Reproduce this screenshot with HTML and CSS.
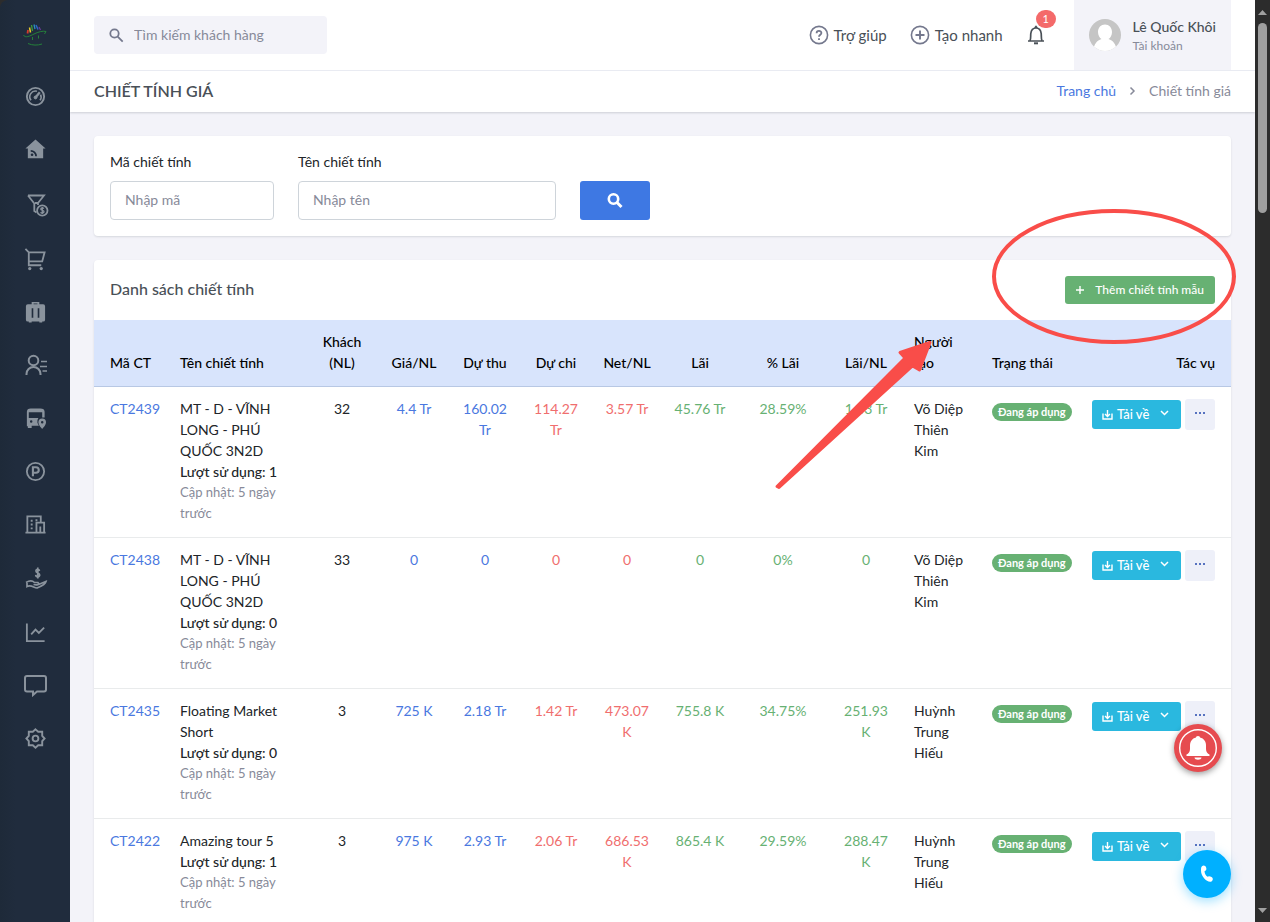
FILE: index.html
```html
<!DOCTYPE html>
<html lang="vi">
<head>
<meta charset="utf-8">
<meta name="viewport" content="width=device-width, initial-scale=1">
<title>Chiết tính giá</title>
<link rel="stylesheet" href="styles.css">
</head>
<body>
<div class="app">
  <aside class="sidebar">
    <a class="logo" href="#" aria-label="Trang chủ">
      <svg width="24" height="24" viewBox="0 0 24 24" fill="none">
        <path d="M4.500 10.500L5 7" stroke="#d33a2c" stroke-width="1.800"/><path d="M7.500 9.500L6.500 4.500" stroke="#e8c82a" stroke-width="1.500"/><path d="M9.500 8L8.500 2" stroke="#3f9a3a" stroke-width="1.300"/><path d="M12 6L11 1.500" stroke="#2a8fc0" stroke-width="1.300"/><path d="M15 6.500L13 2" stroke="#2c66c8" stroke-width="1.500"/><path d="M17.500 7L16 4" stroke="#6a3a9a" stroke-width="1.200"/>
        <path d="M.5 12C2 15.500 7 13 11 11S20 7.500 23 8.500M23 8.500L21.500 11M5 20.500C9 22.500 15 22.500 19 21M9.500 14V17M15.500 12.500V15.500" stroke="#24803a" stroke-width="1"/>
      </svg>
    </a>
    <nav class="menu" aria-label="Menu chính">
      <a href="#" aria-label="Bảng điều khiển"><svg width="23" height="23" viewBox="0 0 24 24" fill="none" stroke="currentColor" stroke-width="2"><circle cx="12" cy="12" r="9"/><path d="M7.300 16A6 6 0 0 1 13.500 6.500M17.300 10A6 6 0 0 1 16.700 16" stroke-width="1.700"/><path d="M12 13L16.500 7.500" stroke-width="2.400"/><circle cx="12" cy="13" r="1.500" fill="currentColor" stroke-width="1"/></svg></a>
      <a href="#" aria-label="Trang nhà"><svg width="23" height="23" viewBox="0 0 24 24"><path fill="currentColor" fill-rule="evenodd" d="M12 1.500L22.500 11H20V21H4V11H1.500ZM7 17.500A1.400 1.400 0 1 0 9.800 17.500A1.400 1.400 0 1 0 7 17.500ZM7 12.500V14.300A4.700 4.700 0 0 1 11.700 19H13.500A6.500 6.500 0 0 0 7 12.500Z"/></svg></a>
      <a href="#" aria-label="Cơ hội"><svg width="27" height="27" viewBox="0 0 27 27" fill="none" stroke="currentColor" stroke-width="1.800"><path d="M6 4.500H22L16 12V14M6 4.500L12.300 12.500V20L14.500 21.500M13 12H16"/><circle cx="20.300" cy="19.500" r="5.200"/><path d="M22 17.500C21 16.500 18.700 16.800 18.800 18.100C19 19.800 22 19 22 20.800C22 22.300 19.300 22.300 18.500 21.300M20.300 16V23" stroke-width="1.300"/></svg></a>
      <a href="#" aria-label="Đơn hàng"><svg width="23" height="23" viewBox="0 0 24 24" fill="none" stroke="currentColor" stroke-width="1.900"><path d="M1.500 1L5 4.500H21.500L19 14H5V4.500M5 14V18H18"/><circle cx="6" cy="21.500" r="1.700" fill="currentColor" stroke="none"/><circle cx="18" cy="21.500" r="1.700" fill="currentColor" stroke="none"/></svg></a>
      <a href="#" aria-label="Tour"><svg width="23" height="23" viewBox="0 0 24 24"><path fill="currentColor" fill-rule="evenodd" d="M8 3.500V1H16V3.500H20A2 2 0 0 1 22 5.500V19.500A2 2 0 0 1 20 21.500H19V22.500H16V21.500H8V22.500H5V21.500H4A2 2 0 0 1 2 19.500V5.500A2 2 0 0 1 4 3.500ZM10 2.700V3.500H14V2.700ZM8 7.500V17.500H9.700V7.500ZM14.300 7.500V17.500H16V7.500Z"/></svg></a>
      <a href="#" aria-label="Khách hàng"><svg width="27" height="23" viewBox="0 0 27 23" fill="none" stroke="currentColor" stroke-width="2"><circle cx="11.500" cy="6.500" r="4.800"/><path d="M4.500 21V20A7 7 0 0 1 18.500 20V21"/><path d="M19 7.500H25M18 12.500H25M20.500 17H25" stroke-width="1.600"/></svg></a>
      <a href="#" aria-label="Điều xe"><svg width="23" height="23" viewBox="0 0 24 24"><path fill="currentColor" fill-rule="evenodd" d="M3 20V5Q3 1.500 7 1.500H17Q21.500 1.500 21.500 5V11H19V5.500H5V11.500H15Q13.500 13.500 14 16.500L15.500 19.500H8V22H4V20ZM6.200 15.200A1.300 1.300 0 1 0 8.800 15.200A1.300 1.300 0 1 0 6.200 15.200ZM19 12A4 4 0 0 1 23 16C23 19 19 23 19 23S15 19 15 16A4 4 0 0 1 19 12ZM17.700 16A1.300 1.300 0 1 0 20.300 16A1.300 1.300 0 1 0 17.700 16Z"/></svg></a>
      <a href="#" aria-label="Điểm đỗ"><svg width="23" height="23" viewBox="0 0 24 24" fill="none" stroke="currentColor" stroke-width="1.900"><circle cx="12" cy="12" r="9"/><path d="M9.300 17V7.500H12.500A2.900 2.900 0 0 1 12.500 13.300H9.500" stroke-width="2.200"/></svg></a>
      <a href="#" aria-label="Khách sạn"><svg width="23" height="23" viewBox="0 0 24 24" fill="none" stroke="currentColor" stroke-width="1.900"><path d="M1.500 20.500H22.500M3.500 20.500V3.500H17.500V9.500M21 20.500V10H13V20.500M17 20.500V14"/><path d="M7 8H9M7 12H9M7 16H9M12 7.500H14" stroke-width="2"/></svg></a>
      <a href="#" aria-label="Thu chi"><svg width="25" height="25" viewBox="0 0 25 25" fill="none" stroke="currentColor" stroke-width="1.700"><path d="M16.500 5C16 2.500 12.700 2.800 13 5.200C13.300 7.400 16.700 6.500 16.700 9C16.700 11.300 13 11.400 12.700 8.800M14.800 1.500V12.500"/><path d="M3 16.500C7 14 9.500 14.500 11.500 16.500H15C17 18.500 14 19.500 10.500 18.500M15.500 18.500L23 15.500C22 19 17.500 20.500 14 22C10.500 21.500 8 18.500 4 20.500V17"/></svg></a>
      <a href="#" aria-label="Báo cáo"><svg width="23" height="23" viewBox="0 0 24 24" fill="none" stroke="currentColor" stroke-width="1.900"><path d="M3 2.500V21H21.500M7.500 14L12 9L15.500 12.500L21 7"/></svg></a>
      <a href="#" aria-label="Tin nhắn"><svg width="25" height="23" viewBox="0 0 25 23" fill="none" stroke="currentColor" stroke-width="2"><path d="M4 2H21Q23 2 23 4V15.500Q23 17.500 21 17.500H14L10 21V17.500H4Q2 17.500 2 15.500V4Q2 2 4 2Z"/></svg></a>
      <a href="#" aria-label="Cài đặt"><svg width="23" height="23" viewBox="0 0 24 24" fill="none" stroke="currentColor" stroke-width="2"><path d="M12 2.500L14.800 5H19V9.200L21.500 12L19 14.800V19H14.800L12 21.500L9.200 19H5V14.800L2.500 12L5 9.200V5H9.200Z"/><circle cx="12" cy="12" r="3"/></svg></a>
    </nav>
  </aside>

  <div class="page">
    <header class="topbar">
      <label class="search">
        <svg width="15" height="15" viewBox="0 0 15 15" fill="none" stroke="currentColor" stroke-width="1.800"><circle cx="5.500" cy="5.500" r="4.200"/><path d="M8.700 8.700L13.700 13.700"/></svg>
        <input type="search" placeholder="Tìm kiếm khách hàng" aria-label="Tìm kiếm khách hàng">
      </label>
      <div class="tools">
        <a class="tool" href="#"><svg width="20" height="20" viewBox="0 0 20 20" fill="none" stroke="currentColor" stroke-width="1.600"><circle cx="10" cy="10" r="8.600"/><path d="M7.600 8.200C7.600 5.200 12.400 5.200 12.400 8C12.400 9.800 10 9.800 10 11.800M10 13.200V15" stroke-width="1.800"/></svg>Trợ giúp</a>
        <a class="tool" href="#"><svg width="20" height="20" viewBox="0 0 20 20" fill="none" stroke="currentColor" stroke-width="1.600"><circle cx="10" cy="10" r="8.600"/><path d="M10 5.500V14.500M5.500 10H14.500" stroke-width="1.900"/></svg>Tạo nhanh</a>
        <button class="bell" type="button" aria-label="Thông báo">
          <svg width="20" height="20" viewBox="0 0 20 20" fill="none" stroke="currentColor" stroke-width="1.700"><path d="M2 16H18M4 15.500C5 14 4.500 11 4.800 8.500C5.200 5 7.500 3 10 3S14.800 5 15.200 8.500C15.500 11 15 14 16 15.500M8.800 3L10 1.500L11.200 3"/><path d="M8 18.300H12" stroke-width="2"/></svg>
          <span class="count">1</span>
        </button>
        <a class="profile" href="#">
          <svg width="32" height="32" viewBox="0 0 32 32"><defs><clipPath id="av"><circle cx="16" cy="16" r="16"/></clipPath></defs><g clip-path="url(#av)"><rect width="32" height="32" fill="#c5c5c5"/><path fill="#fff" d="M16 5.500C20 5.500 23 8.500 23 13C23 16 21.500 19 19.500 20C24 21.500 27 25 28 32H4C5 25 8 21.500 12.500 20C10.500 19 9 16 9 13C9 8.500 12 5.500 16 5.500Z"/></g></svg>
          <span class="who"><span>Lê Quốc Khôi</span><small>Tài khoản</small></span>
        </a>
      </div>
    </header>

    <div class="titlebar">
      <h1>CHIẾT TÍNH GIÁ</h1>
      <nav class="crumbs" aria-label="Đường dẫn">
        <a href="#">Trang chủ</a>
        <svg width="7" height="10" viewBox="0 0 7 10" fill="none" stroke="currentColor" stroke-width="1.500"><path d="M1.500 1.500L5 5L1.500 8.500"/></svg>
        <span>Chiết tính giá</span>
      </nav>
    </div>

    <main class="content">
      <form class="card filter">
        <div class="field code"><label for="ma">Mã chiết tính</label><input id="ma" type="text" placeholder="Nhập mã"></div>
        <div class="field name"><label for="ten">Tên chiết tính</label><input id="ten" type="text" placeholder="Nhập tên"></div>
        <button class="find" type="button" aria-label="Tìm"><svg width="16" height="16" viewBox="0 0 16 16" fill="none" stroke="currentColor" stroke-width="2.600"><circle cx="6.500" cy="6" r="4.700"/><path d="M10 9.500L14.500 14" stroke-width="3"/></svg></button>
      </form>

      <section class="card list">
        <div class="list-head">
          <h2>Danh sách chiết tính</h2>
          <button class="add" type="button"><svg width="10" height="10" viewBox="0 0 10 10" stroke="currentColor" stroke-width="1.400"><path d="M5 1V9M1 5H9"/></svg>Thêm chiết tính mẫu</button>
        </div>
        <table>
          <colgroup><col class="c76"><col class="c136"><col class="c72"><col class="c72"><col class="c70"><col class="c72"><col class="c70"><col class="c76"><col class="c90"><col class="c76"><col class="c78"><col class="c100"><col class="c149"></colgroup>
          <thead><tr><th class="l">Mã CT</th><th class="l">Tên chiết tính</th><th>Khách (NL)</th><th>Giá/NL</th><th>Dự thu</th><th>Dự chi</th><th>Net/NL</th><th>Lãi</th><th>% Lãi</th><th>Lãi/NL</th><th class="l">Người<br>tạo</th><th class="l">Trạng thái</th><th class="r">Tác vụ</th></tr></thead>
          <tbody>
            <tr><td class="l"><a href="#">CT2439</a></td><td class="l">MT - D - VĨNH LONG - PHÚ QUỐC 3N2D<div class="used">Lượt sử dụng: 1</div><small>Cập nhật: 5 ngày trước</small></td><td>32</td><td class="blue">4.4 Tr</td><td class="blue">160.02 Tr</td><td class="red">114.27 Tr</td><td class="red">3.57 Tr</td><td class="green">45.76 Tr</td><td class="green">28.59%</td><td class="green">1.43 Tr</td><td class="l">Võ Diệp Thiên Kim</td><td class="l"><span class="badge">Đang áp dụng</span></td><td><div class="actions"><button class="dl" type="button"><svg width="11" height="11" viewBox="0 0 11 11" fill="none" stroke="currentColor" stroke-width="1.400"><path d="M1 4.500V10H10V4.500M5.500 1V7.500M3 5L5.500 7.500L8 5"/></svg>Tải về<svg class="chev" width="9" height="8" viewBox="0 0 9 8" fill="none" stroke="currentColor" stroke-width="1.500"><path d="M1 1L4.500 4.500L8 1"/></svg></button><button class="more" type="button" aria-label="Thêm thao tác"><i></i><i></i><i></i></button></div></td></tr>
            <tr><td class="l"><a href="#">CT2438</a></td><td class="l">MT - D - VĨNH LONG - PHÚ QUỐC 3N2D<div class="used">Lượt sử dụng: 0</div><small>Cập nhật: 5 ngày trước</small></td><td>33</td><td class="blue">0</td><td class="blue">0</td><td class="red">0</td><td class="red">0</td><td class="green">0</td><td class="green">0%</td><td class="green">0</td><td class="l">Võ Diệp Thiên Kim</td><td class="l"><span class="badge">Đang áp dụng</span></td><td><div class="actions"><button class="dl" type="button"><svg width="11" height="11" viewBox="0 0 11 11" fill="none" stroke="currentColor" stroke-width="1.400"><path d="M1 4.500V10H10V4.500M5.500 1V7.500M3 5L5.500 7.500L8 5"/></svg>Tải về<svg class="chev" width="9" height="8" viewBox="0 0 9 8" fill="none" stroke="currentColor" stroke-width="1.500"><path d="M1 1L4.500 4.500L8 1"/></svg></button><button class="more" type="button" aria-label="Thêm thao tác"><i></i><i></i><i></i></button></div></td></tr>
            <tr><td class="l"><a href="#">CT2435</a></td><td class="l">Floating Market Short<div class="used">Lượt sử dụng: 0</div><small>Cập nhật: 5 ngày trước</small></td><td>3</td><td class="blue">725 K</td><td class="blue">2.18 Tr</td><td class="red">1.42 Tr</td><td class="red">473.07 K</td><td class="green">755.8 K</td><td class="green">34.75%</td><td class="green">251.93 K</td><td class="l">Huỳnh Trung Hiếu</td><td class="l"><span class="badge">Đang áp dụng</span></td><td><div class="actions"><button class="dl" type="button"><svg width="11" height="11" viewBox="0 0 11 11" fill="none" stroke="currentColor" stroke-width="1.400"><path d="M1 4.500V10H10V4.500M5.500 1V7.500M3 5L5.500 7.500L8 5"/></svg>Tải về<svg class="chev" width="9" height="8" viewBox="0 0 9 8" fill="none" stroke="currentColor" stroke-width="1.500"><path d="M1 1L4.500 4.500L8 1"/></svg></button><button class="more" type="button" aria-label="Thêm thao tác"><i></i><i></i><i></i></button></div></td></tr>
            <tr><td class="l"><a href="#">CT2422</a></td><td class="l">Amazing tour 5<div class="used">Lượt sử dụng: 1</div><small>Cập nhật: 5 ngày trước</small></td><td>3</td><td class="blue">975 K</td><td class="blue">2.93 Tr</td><td class="red">2.06 Tr</td><td class="red">686.53 K</td><td class="green">865.4 K</td><td class="green">29.59%</td><td class="green">288.47 K</td><td class="l">Huỳnh Trung Hiếu</td><td class="l"><span class="badge">Đang áp dụng</span></td><td><div class="actions"><button class="dl" type="button"><svg width="11" height="11" viewBox="0 0 11 11" fill="none" stroke="currentColor" stroke-width="1.400"><path d="M1 4.500V10H10V4.500M5.500 1V7.500M3 5L5.500 7.500L8 5"/></svg>Tải về<svg class="chev" width="9" height="8" viewBox="0 0 9 8" fill="none" stroke="currentColor" stroke-width="1.500"><path d="M1 1L4.500 4.500L8 1"/></svg></button><button class="more" type="button" aria-label="Thêm thao tác"><i></i><i></i><i></i></button></div></td></tr>
          </tbody>
        </table>
      </section>
    </main>
  </div>

  <div class="scrollbar" aria-hidden="true">
    <svg width="9" height="5" viewBox="0 0 9 5"><path d="M0 5L4.500 0L9 5Z" fill="#a0a0a0"/></svg>
    <span class="thumb"></span>
    <svg class="down" width="9" height="5" viewBox="0 0 9 5"><path d="M0 0L4.500 5L9 0Z" fill="#a0a0a0"/></svg>
  </div>
</div>

<svg class="marks" width="480" height="290" viewBox="770 205 480 290" aria-hidden="true">
  <ellipse cx="1114" cy="276.500" rx="120" ry="65.500" fill="none" stroke="#f94d49" stroke-width="4"/>
  <path d="M777 486.500L905 358L900 352.500L930 342.500L919.500 370L912.500 366L779 487.500Z" fill="#f94d49" stroke="#f94d49" stroke-width="3" stroke-linejoin="round"/>
</svg>

<button class="fab alert" type="button" aria-label="Thông báo mới"><svg width="48" height="48" viewBox="0 0 48 48"><circle cx="24" cy="24" r="18.300" fill="none" stroke="#fff" stroke-width="1.400"/><path fill="#fff" d="M24 12C25.500 12 26 13 26 13.500C30 14.500 32 17.500 32 21.500V25C32 28 33.500 29.500 35.500 30.500V32H12.500V30.500C14.500 29.500 16 28 16 25V21.500C16 17.500 18 14.500 22 13.500C22 13 22.500 12 24 12ZM20.500 33.500H27.500C27.500 36.500 20.500 36.500 20.500 33.500Z"/></svg></button>
<button class="fab call" type="button" aria-label="Gọi điện"><svg width="16" height="20" viewBox="0 0 16 20"><path fill="#fff" d="M3 2.200C4.500 1 6.500 1.500 7.300 4C7.700 5.700 6.800 7 5.500 7.200C5.700 9.500 6.800 11.500 8.500 12.700C9.500 11.800 11 12 12.500 13C14.500 14.300 14 16.500 12.500 17.500C8.500 19 2 13 2 6.500C2 4.500 2 3.200 3 2.200Z"/></svg></button>
</body>
</html>
```

FILE: styles.css
```css
* { box-sizing: border-box; }
body {
  margin: 0;
  background: #2c2c2c;
  color: #212529;
  font: 14px/21px Lato, "Noto Sans", sans-serif;
}
a { color: #4a78e0; text-decoration: none; }
button, input { font: inherit; color: inherit; border: 0; margin: 0; }
button { cursor: pointer; padding: 0; }
svg { display: block; flex: none; }
h1, h2 { margin: 0; font-size: 16px; color: #495057; }
small { font-size: 12px; color: #878a99; }

.app { display: flex; height: 100vh; overflow: hidden; }

.sidebar {
  flex: 0 0 70px;
  background: linear-gradient(90deg, #1e2a39, #202c3d 16px);
  border-top-left-radius: 8px;
}
.logo { display: flex; justify-content: center; align-items: center; height: 70px; }
.menu { display: flex; flex-direction: column; }
.menu a { display: flex; justify-content: center; padding: 15px 0; color: #8a939d; }

.page {
  flex: 1;
  min-width: 0;
  background: #f3f3f9;
  overflow-y: auto;
  scrollbar-width: none;
}
.topbar {
  display: flex;
  justify-content: space-between;
  align-items: center;
  height: 71px;
  padding: 0 24px;
  background: #fff;
  border-bottom: 1px solid #eceef4;
}
.search {
  display: flex;
  align-items: center;
  gap: 10px;
  width: 233px;
  height: 38px;
  padding: 0 15px;
  background: #f3f3f9;
  border-radius: 4px;
  color: #74788d;
}
.search input { flex: 1; min-width: 0; padding: 0 0 2px; background: none; outline: 0; }
input::placeholder { color: #878a99; opacity: 1; }
.tools { display: flex; align-items: center; height: 100%; }
.tool { display: flex; align-items: center; gap: 5px; margin-right: 23px; color: #495057; font-size: 15px; }
.tool svg { color: #74788d; }
.bell { position: relative; margin-right: 28px; background: none; color: #495057; }
.count {
  position: absolute;
  left: 10px;
  top: -15px;
  width: 20px;
  height: 18px;
  border-radius: 9px;
  background: #f46a6a;
  color: #fff;
  font-size: 11px;
  line-height: 18px;
}
.profile { display: flex; align-items: center; gap: 12px; height: 100%; padding: 0 15px; background: #f3f3f9; color: #495057; }
.who { display: flex; flex-direction: column; font-weight: 500; }
.who small { font-weight: 400; line-height: 18px; }

.titlebar {
  display: flex;
  justify-content: space-between;
  align-items: center;
  height: 41px;
  padding: 0 24px 2px;
  background: #fff;
  box-shadow: 0 1px 2px rgba(56, 65, 74, .2);
}
.titlebar h1 { font-weight: 600; }
.crumbs { display: flex; align-items: center; gap: 13px; color: #878a99; }

.content { display: flex; flex-direction: column; gap: 24px; padding: 24px; }
.card { background: #fff; border-radius: 4px; box-shadow: 0 1px 2px rgba(56, 65, 74, .15); }
.filter { display: flex; align-items: flex-end; gap: 24px; padding: 15px 16px 16px; }
.field { display: flex; flex-direction: column; gap: 9px; }
.code { width: 164px; }
.name { width: 258px; }
.field input { width: 100%; height: 39px; padding: 0 14px 2px; background: #fff; border: 1px solid #ced4da; border-radius: 4px; }
.find { display: flex; justify-content: center; align-items: center; width: 70px; height: 39px; background: #3e78e3; border-radius: 3px; color: #fff; }

.list-head { display: flex; justify-content: space-between; align-items: center; padding: 16px; }
.list-head h2 { padding-bottom: 3px; font-weight: 500; }
.add { display: flex; align-items: center; gap: 10px; height: 28px; padding: 0 11px 1px 10px; background: #67b173; border-radius: 3px; color: #fff; font-size: 12px; font-weight: 500; }

table { width: 100%; table-layout: fixed; border-collapse: separate; border-spacing: 0; }
.c70 { width: 70px; }
.c72 { width: 72px; }
.c76 { width: 76px; }
.c78 { width: 78px; }
.c90 { width: 90px; }
.c100 { width: 100px; }
.c136 { width: 136px; }
.c149 { width: 149px; }
th, td { padding: 11px 10px 13px; text-align: center; vertical-align: top; border-bottom: 1px solid #e9ebec; }
th { background: #d8e4fc; border-color: #b8c8e4; color: #000; font-weight: 500; vertical-align: bottom; }
th:first-child, td:first-child { padding-left: 16px; padding-right: 4px; }
th:last-child, td:last-child { padding-right: 16px; }
td small { display: block; font-size: 13px; line-height: 21px; }
.l { text-align: left; }
.r { text-align: right; }
.used { font-weight: 500; }
.blue { color: #4a78e0; }
.red { color: #f06e6e; }
.green { color: #67b173; }
.badge { display: inline-block; margin-top: 5px; padding: 0 6px 1px; background: #67b173; border-radius: 9px; color: #fff; font-size: 11px; font-weight: 700; line-height: 17px; vertical-align: top; white-space: nowrap; }
.actions { display: flex; justify-content: flex-end; align-items: center; gap: 4px; padding-top: 1px; }
.dl { display: flex; align-items: center; gap: 4px; width: 89px; height: 29px; padding: 0 12px 1px 10px; background: #2ab8df; border-radius: 3px; color: #fff; font-size: 13px; font-weight: 500; }
.chev { margin-left: auto; }
.more { display: flex; justify-content: center; align-items: center; gap: 2px; width: 30px; height: 31px; background: #eef0f9; border-radius: 3px; padding-bottom: 4px; }
.more i { width: 2px; height: 2px; background: #5672c0; }

.scrollbar { flex: 0 0 15px; display: flex; flex-direction: column; align-items: center; gap: 8px; padding: 10px 0 9px; background: #2c2c2c; }
.thumb { width: 9px; height: 190px; background: #9f9f9f; border-radius: 5px; }
.down { margin-top: auto; }

.marks { position: absolute; left: 770px; top: 205px; pointer-events: none; }
.fab { position: fixed; display: flex; justify-content: center; align-items: center; width: 48px; height: 48px; border-radius: 50%; }
.alert { right: 48px; bottom: 150px; background: #e64b4f; box-shadow: 0 2px 6px rgba(0, 0, 0, .4); }
.call { right: 39px; bottom: 24px; background: #00b0ff; box-shadow: 0 3px 12px rgba(0, 176, 255, .4); }
```
